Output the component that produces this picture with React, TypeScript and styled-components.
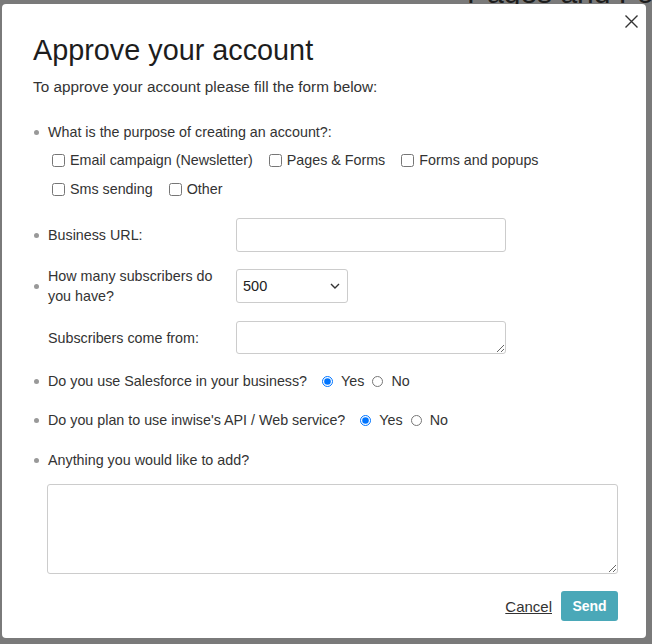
import React from "react";
import styled, { createGlobalStyle } from "styled-components";

const GlobalStyle = createGlobalStyle`
	html, body {
		margin: 0;
		padding: 0;
		background: #7a7a7a;
		font-family: "Liberation Sans", Arial, sans-serif;
	}
`;

const Backdrop = styled.div`
	position: relative;
	width: 652px;
	height: 644px;
	overflow: hidden;
	background: #7a7a7a;
`;

const BehindTitle = styled.div`
	position: absolute;
	top: -24px;
	left: 467px;
	font-size: 30px;
	color: #1d1d1d;
	white-space: nowrap;
`;

const Modal = styled.div`
	position: relative;
	margin: 4px 0 0 2px;
	width: 644px;
	height: 634px;
	box-sizing: border-box;
	background: #fff;
	border-radius: 4px;
	padding: 29px 28px 0 31px;
	color: #333;
`;

const Close = styled.button`
	position: absolute;
	top: 5px;
	right: 3px;
	width: 24px;
	height: 24px;
	padding: 0;
	border: none;
	background: none;
	display: flex;
	align-items: center;
	justify-content: center;
	cursor: pointer;
`;

const Title = styled.h1`
	margin: 0;
	font-size: 28.8px;
	font-weight: normal;
	line-height: 34px;
	color: #1d1d1d;
`;

const Intro = styled.p`
	margin: 10px 0 0;
	font-size: 15.3px;
	line-height: 20px;
	color: #333;
`;

const List = styled.ul`
	margin: 25px 0 0;
	padding: 0 0 0 15px;
	list-style: none;
	font-size: 14.3px;
	line-height: 20px;
`;

const Item = styled.li<{ $gap?: number; $dot?: boolean; $center?: boolean }>`
	position: relative;
	margin-bottom: ${(p) => p.$gap ?? 18}px;

	&::before {
		content: "";
		display: ${(p) => (p.$dot === false ? "none" : "block")};
		position: absolute;
		left: -14px;
		top: ${(p) => (p.$center ? "calc(50% - 2px)" : "8px")};
		width: 5px;
		height: 5px;
		border-radius: 50%;
		background: #999;
	}
`;

const Checks = styled.div`
	display: flex;
	flex-wrap: wrap;
	column-gap: 12px;
	row-gap: 9px;
	margin-top: 8px;
	width: 540px;
`;

const Check = styled.label`
	display: flex;
	align-items: center;
	gap: 5px;
	input {
		margin: 0 0 0 4px;
		width: 13px;
		height: 13px;
	}
`;

const FieldRow = styled.div`
	display: grid;
	grid-template-columns: 188px 270px;
	align-items: center;
`;

const Input = styled.input`
	box-sizing: border-box;
	width: 270px;
	height: 34px;
	border: 1px solid #ccc;
	border-radius: 3px;
	font: inherit;
`;

const SmallArea = styled.textarea`
	box-sizing: border-box;
	width: 270px;
	height: 33px;
	border: 1px solid #ccc;
	border-radius: 3px;
	font: inherit;
	display: block;
`;

const SelectWrap = styled.div`
	position: relative;
	width: 112px;
	height: 34px;
`;

const Select = styled.select`
	appearance: none;
	box-sizing: border-box;
	width: 100%;
	height: 100%;
	border: 1px solid #ccc;
	border-radius: 3px;
	background: #fff;
	padding: 0 0 0 6px;
	font: inherit;
	font-size: 14.5px;
	color: #222;
`;

const Chevron = styled.svg`
	position: absolute;
	right: 8px;
	top: 14px;
	pointer-events: none;
`;

const RadioRow = styled.div`
	display: flex;
	align-items: center;
`;

const Radio = styled.label`
	display: flex;
	align-items: center;
	margin-left: 15px;
	input {
		margin: 0 8px 0 0;
		width: 11px;
		height: 11px;
	}
	& + & {
		margin-left: 8px;
	}
`;

const BigArea = styled.textarea`
	display: block;
	box-sizing: border-box;
	margin: 14px 0 0 14px;
	width: 571px;
	height: 90px;
	border: 1px solid #ccc;
	border-radius: 3px;
	font: inherit;
`;

const Footer = styled.div`
	display: flex;
	justify-content: flex-end;
	align-items: center;
	gap: 9px;
	margin-top: 17px;
`;

const Cancel = styled.a`
	font-size: 15px;
	color: #333;
	text-decoration: underline;
	cursor: pointer;
	margin-top: 1px;
`;

const Send = styled.button`
	height: 30px;
	width: 57px;
	padding: 0;
	border: none;
	border-radius: 3px;
	background: #4aa8b8;
	color: #fff;
	font-family: "Liberation Sans", Arial, sans-serif;
	font-size: 14px;
	font-weight: bold;
`;

export default function App() {
	return (
		<Backdrop>
			<GlobalStyle />
			<BehindTitle>Pages and Forms</BehindTitle>
			<Modal>
				<Close aria-label="Close">
					<svg width="13" height="13" viewBox="0 0 13 13">
						<path d="M0.5 0.5 L12.5 12.5 M12.5 0.5 L0.5 12.5" stroke="#333" strokeWidth="1.4" fill="none" />
					</svg>
				</Close>
				<Title>Approve your account</Title>
				<Intro>To approve your account please fill the form below:</Intro>

				<List>
					<Item $gap={19}>
						What is the purpose of creating an account?:
						<Checks>
							<Check><input type="checkbox" />Email campaign (Newsletter)</Check>
							<Check><input type="checkbox" />Pages &amp; Forms</Check>
							<Check><input type="checkbox" />Forms and popups</Check>
							<Check><input type="checkbox" />Sms sending</Check>
							<Check><input type="checkbox" />Other</Check>
						</Checks>
					</Item>
					<Item $gap={14} $center>
						<FieldRow>
							<span>Business URL:</span>
							<Input type="text" />
						</FieldRow>
					</Item>
					<Item $gap={15} $center>
						<FieldRow>
							<span>How many subscribers do<br />you have?</span>
							<SelectWrap>
								<Select defaultValue="500">
									<option>500</option>
									<option>1000</option>
									<option>5000</option>
								</Select>
								<Chevron width="10" height="7" viewBox="0 0 10 7">
									<path d="M1 1 L5 5 L9 1" stroke="#333" strokeWidth="1.4" fill="none" />
								</Chevron>
							</SelectWrap>
						</FieldRow>
					</Item>
					<Item $gap={17} $dot={false}>
						<FieldRow>
							<span>Subscribers come from:</span>
							<SmallArea />
						</FieldRow>
					</Item>
					<Item $gap={19}>
						<RadioRow>
							Do you use Salesforce in your business?
							<Radio><input type="radio" name="sf" defaultChecked />Yes</Radio>
							<Radio><input type="radio" name="sf" />No</Radio>
						</RadioRow>
					</Item>
					<Item $gap={20}>
						<RadioRow>
							Do you plan to use inwise's API / Web service?
							<Radio><input type="radio" name="api" defaultChecked />Yes</Radio>
							<Radio><input type="radio" name="api" />No</Radio>
						</RadioRow>
					</Item>
					<Item $gap={0}>Anything you would like to add?</Item>
				</List>
				<BigArea />
				<Footer>
					<Cancel>Cancel</Cancel>
					<Send>Send</Send>
				</Footer>
			</Modal>
		</Backdrop>
	);
}
